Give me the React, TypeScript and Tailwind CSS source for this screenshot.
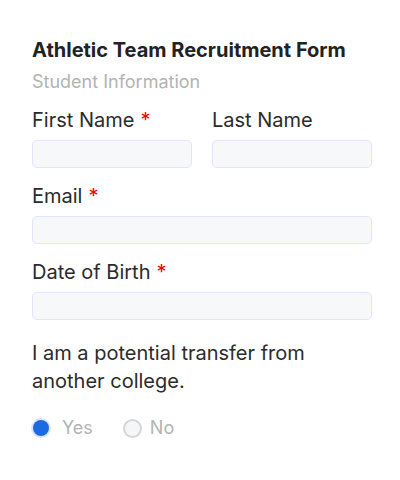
import React from 'react';

function Req() {
  return <span className="text-[#ff0000] ml-[6px]">*</span>;
}

function Field({ label, required }: { label: string; required?: boolean }) {
  return (
    <div className="flex flex-col flex-1">
      <label className="text-[20px] leading-6 text-[#2b2b2b]">
        {label}
        {required && <Req />}
      </label>
      <input
        type="text"
        className="mt-2 h-7 w-full rounded-[5px] border border-[#e1e5fb] bg-[#f7f8fa] outline-none"
      />
    </div>
  );
}

export default function App() {
  return (
    <div className="min-h-[480px] bg-white pl-8 pr-7 pt-[38px]" style={{ fontFamily: 'Inter, "Noto Sans", sans-serif' }}>
      <h1 className="text-[20px] leading-6 font-bold text-[#222]">Athletic Team Recruitment Form</h1>
      <p className="mt-2 text-[18px] leading-6 text-[#b3b3b3]">Student Information</p>

      <div className="mt-[14px] flex gap-5">
        <Field label="First Name" required />
        <Field label="Last Name" />
      </div>
      <div className="mt-4">
        <Field label="Email" required />
      </div>
      <div className="mt-4">
        <Field label="Date of Birth" required />
      </div>

      <p className="mt-[19px] text-[20px] leading-7 text-[#2b2b2b]">
        I am a potential transfer from
        <br />
        another college.
      </p>

      <div className="mt-[21px] flex items-center gap-[30px] text-[18px] leading-6 text-[#b3b3b3]">
        <label className="flex items-center gap-[13px]">
          <span className="ml-[1px] h-[16px] w-[16px] rounded-full bg-[#1b6ae0] ring-2 ring-[#dbe6fb]" />
          Yes
        </label>
        <label className="flex items-center gap-2">
          <span className="h-[19px] w-[19px] rounded-full border-2 border-[#d6d6d6] bg-[#f5f6f8]" />
          No
        </label>
      </div>
    </div>
  );
}
